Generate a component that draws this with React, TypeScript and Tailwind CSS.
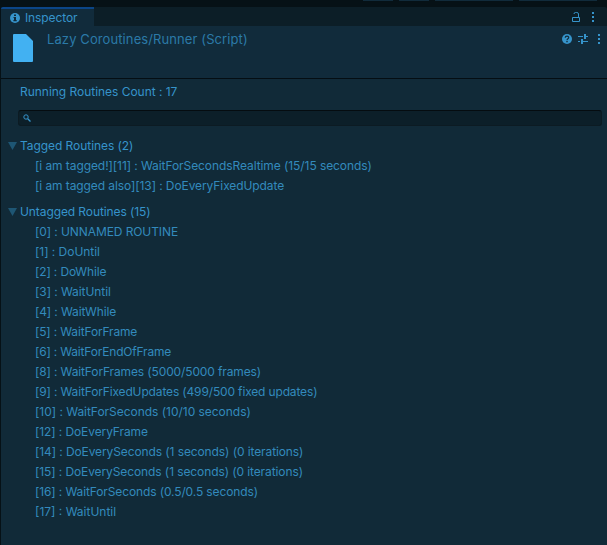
import type { ReactNode } from "react";

type Item = { text: string; tracking: string };

const tagged: Item[] = [
  { text: "[i am tagged!][11] : WaitForSecondsRealtime (15/15 seconds)", tracking: "tracking-[-0.078px]" },
  { text: "[i am tagged also][13] : DoEveryFixedUpdate", tracking: "tracking-[-0.09px]" },
];

const untagged: Item[] = [
  { text: "[0] : UNNAMED ROUTINE", tracking: "tracking-[-0.09px]" },
  { text: "[1] : DoUntil", tracking: "tracking-[-0.04px]" },
  { text: "[2] : DoWhile", tracking: "tracking-[-0.15px]" },
  { text: "[3] : WaitUntil", tracking: "tracking-[-0.07px]" },
  { text: "[4] : WaitWhile", tracking: "tracking-[-0.13px]" },
  { text: "[5] : WaitForFrame", tracking: "tracking-[-0.16px]" },
  { text: "[6] : WaitForEndOfFrame", tracking: "tracking-[-0.19px]" },
  { text: "[8] : WaitForFrames (5000/5000 frames)", tracking: "tracking-[-0.13px]" },
  { text: "[9] : WaitForFixedUpdates (499/500 fixed updates)", tracking: "tracking-[-0.15px]" },
  { text: "[10] : WaitForSeconds (10/10 seconds)", tracking: "tracking-[-0.03px]" },
  { text: "[12] : DoEveryFrame", tracking: "tracking-[-0.1px]" },
  { text: "[14] : DoEverySeconds (1 seconds) (0 iterations)", tracking: "tracking-[-0.1px]" },
  { text: "[15] : DoEverySeconds (1 seconds) (0 iterations)", tracking: "tracking-[-0.1px]" },
  { text: "[16] : WaitForSeconds (0.5/0.5 seconds)", tracking: "tracking-[-0.12px]" },
  { text: "[17] : WaitUntil", tracking: "tracking-normal" },
];

function Dots() {
  return (
    <svg width="2" height="10" fill="#3694cb" shapeRendering="crispEdges">
      <path d="M0 0h2v2H0zM0 4h2v2H0zM0 8h2v2H0z" />
    </svg>
  );
}

function InfoIcon() {
  return (
    <svg width="10" height="10" viewBox="0 0 10 10">
      <circle cx="5" cy="5" r="5" fill="#3694cb" />
      <path d="M4 1.5h2v1.6H4zM3.5 4H6v3h.7v1.2H3.4V7H4V5.1h-.5z" fill="#112b3b" />
    </svg>
  );
}

function HelpIcon() {
  return (
    <svg width="10" height="10" viewBox="0 0 10 10">
      <circle cx="5" cy="5" r="5" fill="#3694cb" />
      <path d="M3.2 3.7C3.3 1.5 6.8 1.6 6.7 3.7 6.6 4.8 5 4.7 5 6.2" fill="none" stroke="#112b3b" strokeWidth="1.2" />
      <path d="M4.3 7h1.4v1.3H4.3z" fill="#112b3b" />
    </svg>
  );
}

function LockIcon() {
  return (
    <svg width="8" height="10" viewBox="0 0 8 10" fill="none" stroke="#3694cb">
      <path d="M.5 5.5h7v4h-7z" />
      <path d="M6.5 5V2Q6.5 .5 4.7 .5H3.5Q2 .5 2 2" />
    </svg>
  );
}

function SlidersIcon() {
  return (
    <svg width="10" height="10" viewBox="0 0 10 10" fill="#3694cb" shapeRendering="crispEdges">
      <path d="M0 2h5v1H0zM6 0h2v5H6zM8 2h2v1H8zM0 7h2v1H0zM3 5h2v5H3zM5 7h5v1H5z" />
    </svg>
  );
}

function Line({ tracking, children }: { tracking: string; children: ReactNode }) {
  return <span className={`whitespace-nowrap leading-5 ${tracking}`}>{children}</span>;
}

function Group({ title, tracking, items }: { title: string; tracking: string; items: Item[] }) {
  return (
    <section>
      <div className="flex h-5 items-center pl-[7px]">
        <svg width="9" height="8" viewBox="0 0 9 8" className="mr-[3px]">
          <path d="M0 0h9L4.5 8z" fill="#1e5674" />
        </svg>
        <Line tracking={tracking}>{title}</Line>
      </div>
      <ul>
        {items.map((item) => (
          <li key={item.text} className="flex h-5 items-center pl-[34px] text-[#338abd]">
            <Line tracking={item.tracking}>{item.text}</Line>
          </li>
        ))}
      </ul>
    </section>
  );
}

export default function App() {
  return (
    <div className="flex h-[545px] w-[607px] flex-col overflow-hidden bg-[#061116] font-['Inter',sans-serif] text-[12px] text-[#3694cb]">
      <div className="flex h-[7px] shrink-0 items-start pl-[363px]">
        <div className="h-px w-[30px] bg-[#112b3b]" />
        <div className="ml-1.5 h-px w-[30px] bg-[#112b3b]" />
        <div className="ml-1.5 h-px w-[78px] bg-[#112b3b]" />
        <div className="ml-1.5 h-px w-[78px] bg-[#112b3b]" />
      </div>
      <div className="ml-px flex grow flex-col">
        <div className="flex h-[19px] shrink-0 rounded-t-[2px] bg-[#0c1e27]">
          <div className="flex w-[93px] items-center rounded-tl-[2px] border-t-2 border-[#0b4587] bg-[#112b3b] pl-[9px]">
            <InfoIcon />
            <span className="ml-[5px] leading-4 tracking-[-0.1px]">Inspector</span>
          </div>
          <div className="ml-auto flex items-center pr-[13px]">
            <LockIcon />
            <span className="ml-[12px]">
              <Dots />
            </span>
          </div>
        </div>
        <header className="flex h-[52px] shrink-0 items-start bg-[#112b3b] pl-3 pr-[7px]">
          <svg width="20" height="28" viewBox="0 0 20 28" className="mt-2">
            <path d="M1 0h12l7 7v20q0 1-1 1H1q-1 0-1-1V1q0-1 1-1z" fill="#42b1f2" />
          </svg>
          <h1 className="ml-[14px] mt-[3px] whitespace-nowrap text-[13px] leading-5 tracking-[0.1px] text-[#2b7aa8]">
            Lazy Coroutines/Runner (Script)
          </h1>
          <div className="ml-auto mt-2 flex">
            <HelpIcon />
            <span className="ml-1.5">
              <SlidersIcon />
            </span>
            <span className="ml-[10px]">
              <Dots />
            </span>
          </div>
        </header>
        <main className="grow border-t border-[#050e13] bg-[#112a38] pt-[3px]">
          <div className="pl-[19px]">
            <Line tracking="tracking-[-0.03px]">Running Routines Count : 17</Line>
          </div>
          <div className="ml-[17px] mt-[8px] flex h-4 w-[584px] items-center rounded-[3px] border border-[#0c1b23] border-t-[#050c10] bg-[#0c1f29] pl-1">
            <svg width="8" height="8" viewBox="0 0 8 8" fill="none" stroke="#3694cb">
              <circle cx="3" cy="3" r="2.2" />
              <path d="M4.7 4.7 7.5 7.5" strokeWidth="1.3" />
            </svg>
          </div>
          <div className="mt-[10px] flex flex-col gap-1.5">
            <Group title="Tagged Routines (2)" tracking="tracking-[-0.06px]" items={tagged} />
            <Group title="Untagged Routines (15)" tracking="tracking-[-0.09px]" items={untagged} />
          </div>
        </main>
      </div>
    </div>
  );
}
